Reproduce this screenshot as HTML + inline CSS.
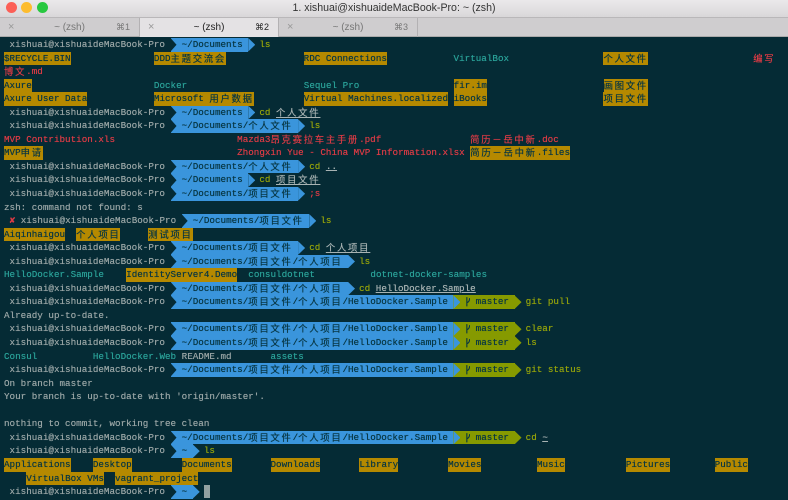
<!DOCTYPE html>
<html><head><meta charset="utf-8"><style>
*{margin:0;padding:0;box-sizing:border-box}
body{width:788px;height:500px;overflow:hidden;background:#052b35;position:relative;font-family:"Liberation Sans",sans-serif}
#title{position:absolute;left:0;top:0;width:788px;height:17px;background:linear-gradient(#ebe9eb,#d9d7d9);text-align:center;font-size:10.6px;line-height:17px;color:#333}
.tl{position:absolute;top:2px;width:11px;height:11px;border-radius:50%}
#tabs{position:absolute;left:0;top:17px;width:788px;height:20px;background:#cfcdcf;border-top:1px solid #b9b7b9;border-bottom:1px solid #aaa}
.tab{position:absolute;top:0;height:19px;border-right:1px solid #b3b1b3;font-size:10px;line-height:19px;color:#777}
.tab.a{background:#e4e2e4;color:#222}
.tab .x{position:absolute;left:8px;font-size:11px;color:#999}
.tab .n{position:absolute;left:0;width:100%;text-align:center}
.tab .k{position:absolute;right:9px;font-size:9px}
#term{position:absolute;left:4px;top:38px;font-family:"Liberation Mono",monospace;font-size:9.25px;color:#9aa6a6;text-shadow:0 0 0.4px currentColor}
.r{height:13.55px;line-height:13.55px;white-space:pre}
#term span,#term b{display:inline-block;vertical-align:top;height:13.55px;line-height:13.55px;white-space:pre}
b{font-weight:normal;font-family:"Noto Sans CJK SC",sans-serif;font-size:9.4px;letter-spacing:1.7px}
.y{background:#b58900;color:#073642}
.c{color:#2aa198}.e{color:#dc3b45}.g{color:#95a30a}.u,.u b{text-decoration:underline;color:#a8b3b3}
.bl,.gr{position:relative;color:#073642}
#term .bl{background:#3a95dc;z-index:2}#term .gr{background:#869a00;z-index:1}
.bl::before{content:"";position:absolute;left:0;top:0;width:6px;height:100%;background:#052b35;clip-path:polygon(0 0,100% 50%,0 100%)}
.bl::after,.gr::after{content:"";position:absolute;left:100%;top:0;width:7px;height:100%;clip-path:polygon(0 0,100% 50%,0 100%)}
.bl::after{background:#3a95dc}.gr::after{background:#869a00}
.br{display:inline-block;width:5.55px;height:13.55px;vertical-align:top}
#term .cur{width:6px;height:13px;background:#93a1a1}
</style></head><body>
<div id="title">1. xishuai@xishuaideMacBook-Pro: ~ (zsh)
<div class="tl" style="left:6px;background:#fc5f57"></div><div class="tl" style="left:21px;background:#fdbc2e"></div><div class="tl" style="left:37px;background:#28c840"></div></div>
<div id="tabs">
<div class="tab" style="left:0;width:140px"><span class="n">~ (zsh)</span><span class="x">×</span><span class="k">⌘1</span></div>
<div class="tab a" style="left:140px;width:139px"><span class="n">~ (zsh)</span><span class="x">×</span><span class="k">⌘2</span></div>
<div class="tab" style="left:279px;width:139px"><span class="n">~ (zsh)</span><span class="x">×</span><span class="k">⌘3</span></div>
</div>
<div id="term">
<div class="r"> xishuai@xishuaideMacBook-Pro <span class="bl">  ~/Documents </span>  <span class="g">ls</span></div>
<div class="r"><span class="y">$RECYCLE.BIN</span>               <span class="y">DDD<b>主题交流会</b></span>              <span class="y">RDC Connections</span>            <span class="c">VirtualBox</span>                 <span class="y"><b>个人文件</b></span>                   <span class="e"><b>编写</b></span></div>
<div class="r"><span class="e"><b>博文</b>.md</span></div>
<div class="r"><span class="y">Axure</span>                      <span class="c">Docker</span>                     <span class="c">Sequel Pro</span>                 <span class="y">fir.im</span>                     <span class="y"><b>画图文件</b></span></div>
<div class="r"><span class="y">Axure User Data</span>            <span class="y">Microsoft <b>用户数据</b></span>         <span class="y">Virtual Machines.localized</span> <span class="y">iBooks</span>                     <span class="y"><b>项目文件</b></span></div>
<div class="r"> xishuai@xishuaideMacBook-Pro <span class="bl">  ~/Documents </span>  <span class="g">cd</span> <span class="u"><b>个人文件</b></span></div>
<div class="r"> xishuai@xishuaideMacBook-Pro <span class="bl">  ~/Documents/<b>个人文件</b> </span>  <span class="g">ls</span></div>
<div class="r"><span class="e">MVP Contribution.xls</span>                      <span class="e">Mazda3<b>昂克赛拉车主手册</b>.pdf</span>                <span class="e"><b>简历－岳中新</b>.doc</span></div>
<div class="r"><span class="y">MVP<b>申请</b></span>                                   <span class="e">Zhongxin Yue - China MVP Information.xlsx</span> <span class="y"><b>简历－岳中新</b>.files</span></div>
<div class="r"> xishuai@xishuaideMacBook-Pro <span class="bl">  ~/Documents/<b>个人文件</b> </span>  <span class="g">cd</span> <span class="u">..</span></div>
<div class="r"> xishuai@xishuaideMacBook-Pro <span class="bl">  ~/Documents </span>  <span class="g">cd</span> <span class="u"><b>项目文件</b></span></div>
<div class="r"> xishuai@xishuaideMacBook-Pro <span class="bl">  ~/Documents/<b>项目文件</b> </span>  <span class="e">;s</span></div>
<div class="r">zsh: command not found: s</div>
<div class="r"> <span class="e">✘</span> xishuai@xishuaideMacBook-Pro <span class="bl">  ~/Documents/<b>项目文件</b> </span>  <span class="g">ls</span></div>
<div class="r"><span class="y">Aiqinhaigou</span>  <span class="y"><b>个人项目</b></span>     <span class="y"><b>测试项目</b></span></div>
<div class="r"> xishuai@xishuaideMacBook-Pro <span class="bl">  ~/Documents/<b>项目文件</b> </span>  <span class="g">cd</span> <span class="u"><b>个人项目</b></span></div>
<div class="r"> xishuai@xishuaideMacBook-Pro <span class="bl">  ~/Documents/<b>项目文件</b>/<b>个人项目</b> </span>  <span class="g">ls</span></div>
<div class="r"><span class="c">HelloDocker.Sample</span>    <span class="y">IdentityServer4.Demo</span>  <span class="c">consuldotnet</span>          <span class="c">dotnet-docker-samples</span></div>
<div class="r"> xishuai@xishuaideMacBook-Pro <span class="bl">  ~/Documents/<b>项目文件</b>/<b>个人项目</b> </span>  <span class="g">cd</span> <span class="u">HelloDocker.Sample</span></div>
<div class="r"> xishuai@xishuaideMacBook-Pro <span class="bl">  ~/Documents/<b>项目文件</b>/<b>个人项目</b>/HelloDocker.Sample </span><span class="gr">  <svg class="br" viewBox="0 0 6 14"><path d="M2 2V12M2 8Q5 7 5 3" stroke="#073642" stroke-width="1.2" fill="none"/></svg> master </span>  <span class="g">git pull</span></div>
<div class="r">Already up-to-date.</div>
<div class="r"> xishuai@xishuaideMacBook-Pro <span class="bl">  ~/Documents/<b>项目文件</b>/<b>个人项目</b>/HelloDocker.Sample </span><span class="gr">  <svg class="br" viewBox="0 0 6 14"><path d="M2 2V12M2 8Q5 7 5 3" stroke="#073642" stroke-width="1.2" fill="none"/></svg> master </span>  <span class="g">clear</span></div>
<div class="r"> xishuai@xishuaideMacBook-Pro <span class="bl">  ~/Documents/<b>项目文件</b>/<b>个人项目</b>/HelloDocker.Sample </span><span class="gr">  <svg class="br" viewBox="0 0 6 14"><path d="M2 2V12M2 8Q5 7 5 3" stroke="#073642" stroke-width="1.2" fill="none"/></svg> master </span>  <span class="g">ls</span></div>
<div class="r"><span class="c">Consul</span>          <span class="c">HelloDocker.Web</span> README.md       <span class="c">assets</span></div>
<div class="r"> xishuai@xishuaideMacBook-Pro <span class="bl">  ~/Documents/<b>项目文件</b>/<b>个人项目</b>/HelloDocker.Sample </span><span class="gr">  <svg class="br" viewBox="0 0 6 14"><path d="M2 2V12M2 8Q5 7 5 3" stroke="#073642" stroke-width="1.2" fill="none"/></svg> master </span>  <span class="g">git status</span></div>
<div class="r">On branch master</div>
<div class="r">Your branch is up-to-date with 'origin/master'.</div>
<div class="r"> </div>
<div class="r">nothing to commit, working tree clean</div>
<div class="r"> xishuai@xishuaideMacBook-Pro <span class="bl">  ~/Documents/<b>项目文件</b>/<b>个人项目</b>/HelloDocker.Sample </span><span class="gr">  <svg class="br" viewBox="0 0 6 14"><path d="M2 2V12M2 8Q5 7 5 3" stroke="#073642" stroke-width="1.2" fill="none"/></svg> master </span>  <span class="g">cd</span> <span class="u">~</span></div>
<div class="r"> xishuai@xishuaideMacBook-Pro <span class="bl">  ~ </span>  <span class="g">ls</span></div>
<div class="r"><span class="y">Applications</span>    <span class="y">Desktop</span>         <span class="y">Documents</span>       <span class="y">Downloads</span>       <span class="y">Library</span>         <span class="y">Movies</span>          <span class="y">Music</span>           <span class="y">Pictures</span>        <span class="y">Public</span></div>
<div class="r">    <span class="y">VirtualBox VMs</span>  <span class="y">vagrant_project</span></div>
<div class="r"> xishuai@xishuaideMacBook-Pro <span class="bl">  ~ </span>  <span class="cur"></span></div>
</div>
</body></html>
